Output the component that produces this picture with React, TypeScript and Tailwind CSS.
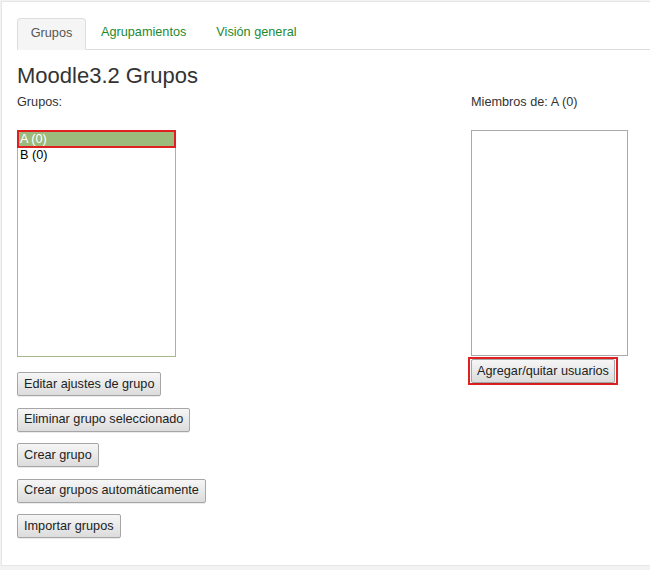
import React, { useState } from 'react';

const groups = ['A (0)', 'B (0)'];

const actions = [
  'Editar ajustes de grupo',
  'Eliminar grupo seleccionado',
  'Crear grupo',
  'Crear grupos automáticamente',
  'Importar grupos',
];

const btn =
  'h-[24px] whitespace-nowrap text-[12.7px] text-[#222] leading-none border border-[#a6a6a6] rounded-[2px] bg-gradient-to-b from-[#f6f6f6] to-[#dcdcdc] shadow-[0_1px_0_rgba(0,0,0,0.08)]';

export default function App() {
  const [selected, setSelected] = useState(0);

  return (
    <div className="w-[650px] h-[570px] bg-[#f2f2f2] pt-px pl-px font-['Liberation_Sans',Arial,sans-serif] overflow-hidden">
      <div className="h-[565px] bg-white border-l border-t border-b border-[#e6e6e6] pl-[15px] pt-[16px]">
        {/* tabs */}
        <div className="flex items-end border-b border-[#dddddd] h-[32px]">
          <div className="h-[32px] w-[69px] -mb-px bg-[#f5f5f5] border border-[#dddddd] border-b-[#f5f5f5] rounded-t-[4px] flex items-center justify-center text-[12.7px] text-[#555]">
            Grupos
          </div>
          <div className="h-[32px] px-[15px] flex items-center text-[12.7px] text-[#1d8a2f]">Agrupamientos</div>
          <div className="h-[32px] px-[15px] flex items-center text-[12.7px] text-[#1d8a2f]">Visión general</div>
        </div>

        <h2 className="mt-[13px] text-[22px] leading-[26px] text-[#333]">Moodle3.2 Grupos</h2>

        <div className="flex mt-[4px]">
          {/* groups column */}
          <div className="w-[454px]">
            <div className="text-[12.7px] text-[#333] leading-[18px]">Grupos:</div>
            <div className="mt-[19px] w-[159px] h-[227px] border border-[#a3b88e] bg-white text-[12.7px] leading-[16px]">
              {groups.map((g, i) => (
                <div
                  key={g}
                  onClick={() => setSelected(i)}
                  className={
                    i === selected
                      ? 'h-[16px] pl-[2px] bg-[#9cba7c] text-white outline-2 outline-[#e02020] -outline-offset-1'
                      : 'h-[16px] pl-[2px] text-black'
                  }
                >
                  {g}
                </div>
              ))}
            </div>
            <div className="mt-[15px] flex flex-col items-start gap-[11.5px]">
              {actions.map((a) => (
                <button key={a} className={btn + ' px-[6px]'}>
                  {a}
                </button>
              ))}
            </div>
          </div>

          {/* members column */}
          <div>
            <div className="text-[12.7px] text-[#333] leading-[18px]">Miembros de: {groups[selected]}</div>
            <div className="mt-[19px] w-[157px] h-[226px] border border-[#a9a9a9] bg-white" />
            <div className="mt-px -ml-[3px] inline-flex px-px border-2 border-[#e02020]">
              <button className={btn + ' px-[5px]'}>Agregar/quitar usuarios</button>
            </div>
          </div>
        </div>
      </div>
    </div>
  );
}
